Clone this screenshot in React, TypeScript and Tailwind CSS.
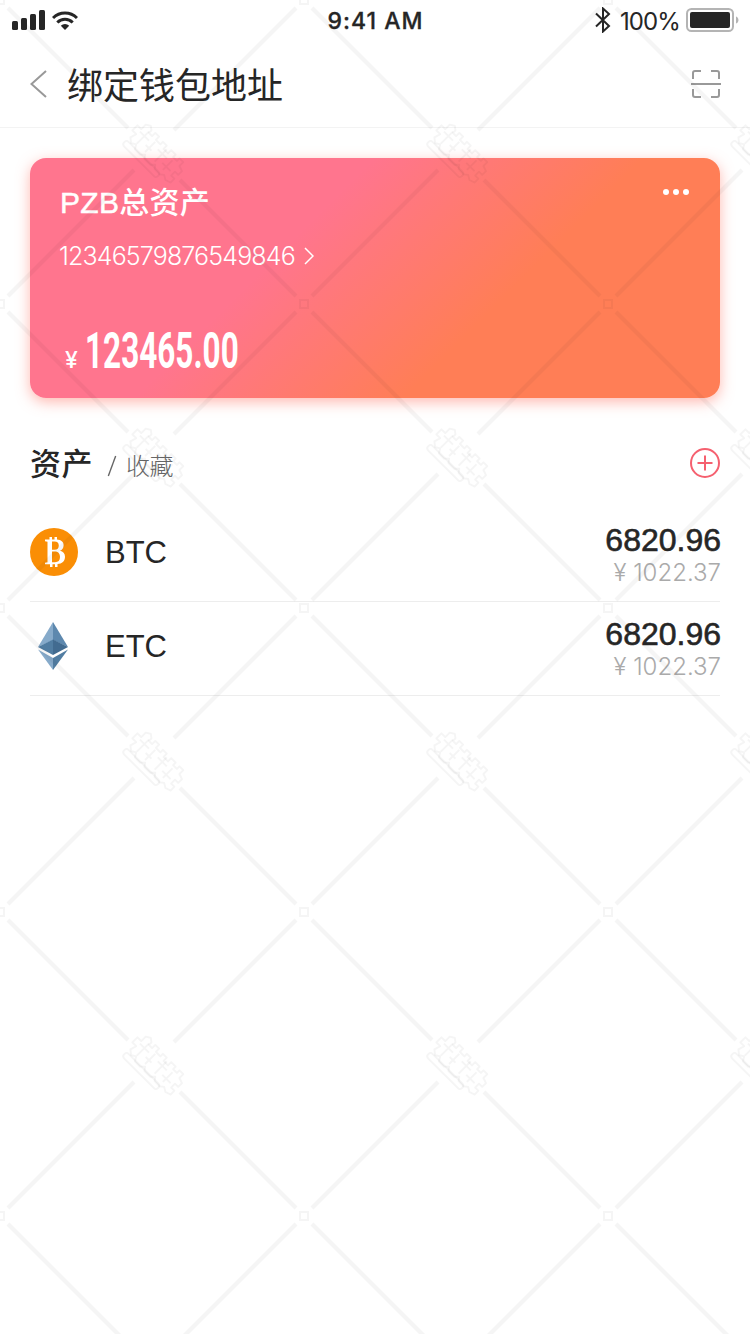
import React from 'react';

const assets = [
  { id: 'btc', name: 'BTC', amount: '6820.96', value: '1022.37' },
  { id: 'etc', name: 'ETC', amount: '6820.96', value: '1022.37' },
];

const BtcIcon = () => (
  <svg width="48" height="48" viewBox="0 0 48 48">
    <circle cx="24" cy="24" r="24" fill="#fa8e05" />
    <path
      fill="#fff"
      fillRule="evenodd"
      d="M15 11.500h4.500V9H22v2.500h2.500V9H27v2.600c4 .3 6.600 2.200 6.600 5.600 0 2.800-1.500 4.800-3.600 5.500 3 .6 5 2.600 5 6 0 4.600-3 7-7.500 7.300v3H25V36.300h-2.500V39H20v-2.700h-5v-1.500l2.500-.6V13.800L15 13.200zM22 13.500v8.200h2.500c2.800 0 4.300-1.500 4.300-4.300 0-2.700-1.500-3.900-4.200-3.900zM22 23.600v10.700h3c3.300 0 5-1.800 5-5.200s-1.800-5.500-5-5.500z"
    />
  </svg>
);

const EtcIcon = () => (
  <svg width="48" height="48" viewBox="0 0 48 48">
    <path fill="#86aaca" d="M23 0 8 25l15-7z" />
    <path fill="#5d88ae" d="m23 0 15 25-15-7z" />
    <path fill="#517da2" d="m8 25 15-7.500V33z" />
    <path fill="#426b90" d="m38 25-15-7.500V33z" />
    <path fill="#86aaca" d="m8 27.500 15 8.500v12z" />
    <path fill="#517da2" d="m38 27.500-15 8.500v12z" />
  </svg>
);

const StatusBar = () => (
  <div className="flex h-10 items-center justify-between pl-3 pr-[11px] text-[#262626]">
    <div className="flex w-[230px] items-center gap-[7px]">
      <svg width="33" height="20" viewBox="0 0 33 20" fill="currentColor">
        <rect x="0" y="11" width="6" height="9" rx="1.500" />
        <rect x="9" y="8" width="6" height="12" rx="1.500" />
        <rect x="18" y="4" width="6" height="16" rx="1.500" />
        <rect x="27" y="0" width="6" height="20" rx="1.500" />
      </svg>
      <svg width="26" height="19" viewBox="0 0 26 19" fill="none" stroke="currentColor" strokeWidth="3">
        <path d="M1 7a17 17 0 0 1 24 0" />
        <path d="M5.300 11.500a11 11 0 0 1 15.400 0" />
        <path d="m13 19-4.200-4.300a6 6 0 0 1 8.400 0z" fill="currentColor" stroke="none" />
      </svg>
    </div>
    <span className="pt-0.5 text-[23px] font-medium tracking-[1px] [-webkit-text-stroke:0.3px]">9:41 AM</span>
    <div className="flex w-[230px] items-center justify-end">
      <svg width="16" height="26" viewBox="0 0 16 26" fill="none" stroke="currentColor" strokeWidth="2">
        <path d="m1 6.500 13 12.500-6 5.500v-23L14 7 1 19.500" />
      </svg>
      <span className="ml-[9px] pt-[3px] text-[24px] leading-none tracking-[-0.9px]">100%</span>
      <svg className="ml-[6px]" width="53" height="24" viewBox="0 0 53 24">
        <rect x="1" y="1" width="46" height="22" rx="4.500" fill="none" stroke="#b4b4b4" strokeWidth="2" />
        <rect x="4" y="4" width="40" height="16" rx="2" fill="#262626" />
        <path d="M50 8.500c3.300 1 3.300 6 0 7z" fill="#b4b4b4" />
      </svg>
    </div>
  </div>
);

const Watermark = () => (
  <svg className="pointer-events-none absolute inset-0" width="750" height="1334">
    <defs>
      <pattern id="lattice" width="304" height="304" patternUnits="userSpaceOnUse">
        <g fill="none" stroke="#000" strokeOpacity=".04">
          <path strokeWidth="4" d="m8 8 120 120M180 180l116 116M296 8 174 130M134 170 8 296" />
          <path strokeWidth="2" d="M0 4h4V0M300 0v4h4M0 300h4v4M300 304v-4h4" />
          {/* stamp where the diagonals cross */}
          <g transform="translate(154 152) rotate(45) scale(.9)" strokeWidth="2" strokeLinejoin="round">
            <path d="M-34-8h6v-7l5-3 4 3v4h5v-5h6v5h7v-4h6v5h7v-5h7v4h6v-4h6v6l6 2v6h-5v6h5v6l-6 2-5-3-4 3h-8l-3-4-4 4h-9l-3-4-4 4h-8l-3-5-5 3-5-4 2-7h-6z" />
            <path d="M-27-5h14M-20-12v19M-12 1h9M-7-9v16M1-5h14M8-12v19M15 2h13M21-8v15" />
            <rect x="-31" y="12" width="53" height="7" rx="3" />
          </g>
        </g>
      </pattern>
    </defs>
    <rect width="750" height="1334" fill="url(#lattice)" />
  </svg>
);

const App: React.FC = () => {
  return (
    <div className="relative h-[1334px] w-[750px] overflow-hidden bg-white font-['Inter','Noto_Sans_CJK_SC',sans-serif] text-[#262626]">
      <StatusBar />

      {/* Header */}
      <header className="flex h-[88px] items-center justify-between border-b border-[#f3f3f3] pl-[30px] pr-[29px]">
        <div className="flex items-center gap-5">
          <svg width="17" height="28" viewBox="0 0 17 28" fill="none" stroke="#999" strokeWidth="2">
            <path d="M16 1 1.500 14 16 27" />
          </svg>
          <h1 className="pt-[4px] text-[36px] leading-none">绑定钱包地址</h1>
        </div>
        <svg width="30" height="30" viewBox="0 0 30 30" fill="none" stroke="#999" strokeWidth="2">
          <path d="M2 10V4q0-2 2-2h6M20 2h6q2 0 2 2v6M2 20v6q0 2 2 2h6M20 28h6q2 0 2-2v-6M0 15h30" />
        </svg>
      </header>

      {/* Total balance card */}
      <section className="mx-[30px] mt-[30px] flex h-60 flex-col rounded-2xl bg-linear-[135deg,#ff758e_37%,#ff7e56_66%] px-[30px] pt-[27px] text-white shadow-[0_4px_14px_rgba(255,115,100,0.5)]">
        <div className="flex items-start justify-between">
          <h2 className="font-['Liberation_Sans','Noto_Sans_CJK_SC',sans-serif] text-[30px] font-medium leading-[36px] tracking-[0.3px]">
            <span className="[-webkit-text-stroke:0.5px]">PZB</span>总资产
          </h2>
          <svg className="mt-1 mr-[1px]" width="26" height="6" viewBox="0 0 26 6" fill="#fff">
            <circle cx="3" cy="3" r="3" />
            <circle cx="13" cy="3" r="3" />
            <circle cx="23" cy="3" r="3" />
          </svg>
        </div>
        <div className="mt-[20px] flex items-center gap-2 text-[25px] font-light leading-[30px]">
          <span className="-ml-px w-[237px] whitespace-nowrap tracking-[-0.85px]">12346579876549846</span>
          <svg width="10" height="18" viewBox="0 0 10 18" fill="none" stroke="#fff" strokeWidth="1.500">
            <path d="m1 1 8 8-8 8" />
          </svg>
        </div>
        <div className="mt-[55px] flex items-baseline pl-[5px]">
          <span className="w-[20px] text-[23px] font-medium">¥</span>
          <span className="origin-left scale-x-[0.63] font-['Roboto'] text-[50px] font-bold leading-[50px]">123465.00</span>
        </div>
      </section>

      {/* Tabs */}
      <div className="mx-[30px] mt-[40px] flex h-[50px] items-center justify-between">
        <div className="flex items-baseline pt-[3px]">
          <span className="text-[31px] font-medium tracking-[0.5px]">资产</span>
          <svg className="ml-[14px] self-center pt-0.5" width="10" height="24" viewBox="0 0 10 24" fill="none" stroke="#666" strokeWidth="1.500">
            <path d="M9 1 1 23" />
          </svg>
          <span className="ml-[9px] text-[24px] font-light tracking-[-0.5px] text-[#666]">收藏</span>
        </div>
        <svg width="30" height="30" viewBox="0 0 30 30" fill="none" stroke="#f5606f" strokeWidth="2">
          <circle cx="15" cy="15" r="14" />
          <path d="M7.500 15h15M15 7.500v15" />
        </svg>
      </div>

      {/* Asset list */}
      <ul className="mx-[30px] mt-5">
        {assets.map((asset) => (
          <li key={asset.id} className="flex h-[94px] items-center border-b border-[#ededed]">
            <div className="flex items-center pb-[6px]">
              {asset.id === 'btc' ? <BtcIcon /> : <EtcIcon />}
              <span className="ml-[27px] pt-[3px] font-['Liberation_Sans',sans-serif] text-[31px]">{asset.name}</span>
            </div>
            <div className="-mr-px ml-auto pt-0.5 text-right">
              <p className="font-['Liberation_Sans',sans-serif] text-[32px] leading-[34px] [-webkit-text-stroke:0.6px]">{asset.amount}</p>
              <p className="text-[24px] font-light leading-[32px] text-[#aaa]">¥ {asset.value}</p>
            </div>
          </li>
        ))}
      </ul>

      <Watermark />
    </div>
  );
};

export default App;
